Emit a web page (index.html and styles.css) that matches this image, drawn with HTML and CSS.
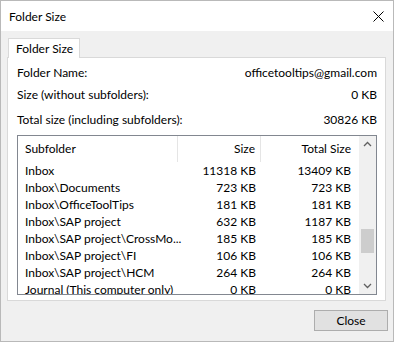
FILE: index.html
```html
<!DOCTYPE html>
<html lang="en">
<head>
    <meta charset="UTF-8">
    <title>Folder Size</title>
    <link rel="stylesheet" href="styles.css">
</head>
<body>
    <div class="window">
        <div class="titlebar">
            <span class="title">Folder Size</span>
            <svg class="close-x" width="11" height="11" viewBox="0 0 11 11">
                <path d="M0.5 0.5 L10.5 10.5 M10.5 0.5 L0.5 10.5" stroke="#000" stroke-width="1" fill="none"/>
            </svg>
        </div>
        <div class="content">
            <div class="tabs">
                <div class="tab">Folder Size</div>
            </div>
            <div class="panel">
                <div class="info-row first">
                    <span>Folder Name:</span>
                    <span>officetooltips@gmail.com</span>
                </div>
                <div class="info-row">
                    <span>Size (without subfolders):</span>
                    <span>0 KB</span>
                </div>
                <div class="info-row third">
                    <span>Total size (including subfolders):</span>
                    <span>30826 KB</span>
                </div>
                <div class="listbox">
                    <div class="list">
                        <div class="list-head">
                            <div class="col name">Subfolder</div>
                            <div class="col size">Size</div>
                            <div class="col total">Total Size</div>
                        </div>
                        <div class="row"><div class="col name">Inbox</div><div class="col size">11318 KB</div><div class="col total">13409 KB</div></div>
                        <div class="row"><div class="col name">Inbox\Documents</div><div class="col size">723 KB</div><div class="col total">723 KB</div></div>
                        <div class="row"><div class="col name">Inbox\OfficeToolTips</div><div class="col size">181 KB</div><div class="col total">181 KB</div></div>
                        <div class="row"><div class="col name">Inbox\SAP project</div><div class="col size">632 KB</div><div class="col total">1187 KB</div></div>
                        <div class="row"><div class="col name">Inbox\SAP project\CrossMo...</div><div class="col size">185 KB</div><div class="col total">185 KB</div></div>
                        <div class="row"><div class="col name">Inbox\SAP project\FI</div><div class="col size">106 KB</div><div class="col total">106 KB</div></div>
                        <div class="row"><div class="col name">Inbox\SAP project\HCM</div><div class="col size">264 KB</div><div class="col total">264 KB</div></div>
                        <div class="row"><div class="col name">Journal (This computer only)</div><div class="col size">0 KB</div><div class="col total">0 KB</div></div>
                    </div>
                    <div class="scrollbar">
                        <svg class="arrow" width="17" height="17" viewBox="0 0 17 17">
                            <path d="M5 10 L8.5 6.5 L12 10" stroke="#606060" stroke-width="1.3" fill="none"/>
                        </svg>
                        <div class="track">
                            <div class="thumb"></div>
                        </div>
                        <svg class="arrow" width="17" height="17" viewBox="0 0 17 17">
                            <path d="M5 7 L8.5 10.5 L12 7" stroke="#606060" stroke-width="1.3" fill="none"/>
                        </svg>
                    </div>
                </div>
            </div>
            <div class="footer">
                <button class="btn">Close</button>
            </div>
        </div>
    </div>
</body>
</html>
```

FILE: styles.css
```css
body {
    margin: 0;
    font-family: Lato, "Noto Sans", Arial, sans-serif;
    font-size: 12px;
    color: #000;
}

.window {
    width: 394px;
    height: 342px;
    box-sizing: border-box;
    border: 1px solid #b9b9b9;
    display: flex;
    flex-direction: column;
    background-color: #f0f0f0;
}

.titlebar {
    height: 30px;
    background-color: #fff;
    display: flex;
    align-items: center;
    justify-content: space-between;
    padding: 0 9px 0 8px;
}

.title {
    font-size: 12px;
    margin-top: 1px;
}

.content {
    flex: 1;
    display: flex;
    flex-direction: column;
    padding: 7px 7px 0 6px;
}

.tabs {
    display: flex;
    padding-left: 1px;
}

.tab {
    height: 20px;
    box-sizing: border-box;
    padding: 0 6px 0 7px;
    line-height: 20px;
    background-color: #fff;
    border: 1px solid #d9d9d9;
    border-bottom: none;
    margin-bottom: -1px;
    position: relative;
}

.panel {
    height: 244px;
    box-sizing: border-box;
    background-color: #fff;
    border: 1px solid #d9d9d9;
    padding: 0 8px 0 9px;
}

.info-row {
    display: flex;
    justify-content: space-between;
    line-height: 16px;
    margin-top: 6px;
}

.info-row.first {
    margin-top: 7px;
}

.info-row.third {
    margin-top: 9px;
}

.listbox {
    margin-top: 7px;
    width: 360px;
    height: 160px;
    box-sizing: border-box;
    border: 1px solid #828790;
    display: flex;
    overflow: hidden;
}

.list {
    flex: 1;
    overflow: hidden;
}

.list-head {
    display: flex;
    height: 26px;
    align-items: stretch;
}

.list-head .col {
    line-height: 26px;
    border-right: 1px solid #e5e5e5;
}

.list-head .col.total {
    border-right: none;
}

.row {
    display: flex;
    height: 17px;
    line-height: 17px;
}

.col {
    box-sizing: border-box;
    white-space: nowrap;
}

.col.name {
    width: 160px;
    padding-left: 7px;
}

.col.size {
    width: 83px;
    text-align: right;
    padding-right: 5px;
}

.col.total {
    width: 97px;
    text-align: right;
    padding-right: 7px;
}

.scrollbar {
    width: 17px;
    background-color: #f0f0f0;
    display: flex;
    flex-direction: column;
}

.arrow {
    display: block;
    flex-shrink: 0;
}

.track {
    flex: 1;
    display: flex;
    flex-direction: column;
    align-items: center;
    padding-top: 76px;
}

.thumb {
    width: 13px;
    height: 24px;
    background-color: #cdcdcd;
}

.footer {
    display: flex;
    justify-content: flex-end;
    padding-top: 9px;
    margin-right: -2px;
}

.btn {
    width: 74px;
    height: 21px;
    font-family: inherit;
    font-size: 12px;
    background-color: #e1e1e1;
    border: 1px solid #adadad;
    padding: 0;
    color: #000;
}
```
